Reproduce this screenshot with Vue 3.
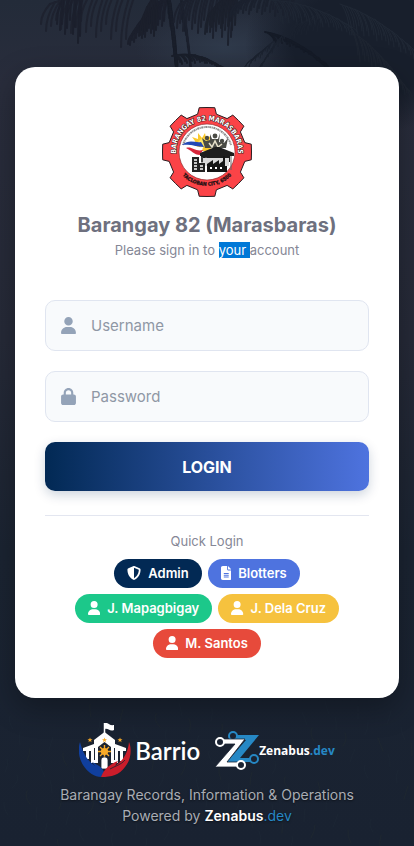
<template>
  <main class="page">
    <svg class="backdrop" viewBox="0 0 414 846" preserveAspectRatio="xMidYMin slice" aria-hidden="true">
      <defs>
        <linearGradient id="night" x1="0" y1="0" x2="0" y2="1">
          <stop offset="0" stop-color="#232b39" />
          <stop offset="0.1" stop-color="#292d3c" />
          <stop offset="0.4" stop-color="#262a38" />
          <stop offset="0.65" stop-color="#1b2432" />
          <stop offset="1" stop-color="#192231" />
        </linearGradient>
        <radialGradient id="glow">
          <stop offset="0" stop-color="#2f3a4b" />
          <stop offset="1" stop-color="#2f3a4b" stop-opacity="0" />
        </radialGradient>
        <radialGradient id="canopy">
          <stop offset="0.6" stop-color="#181f2c" />
          <stop offset="1" stop-color="#181f2c" stop-opacity="0" />
        </radialGradient>
      </defs>
      <rect width="414" height="846" fill="url(#night)" />
      <ellipse cx="225" cy="48" rx="90" ry="40" fill="url(#glow)" />
      <ellipse cx="365" cy="44" rx="120" ry="90" fill="url(#canopy)" />
      <path v-for="(leaf, i) in leaves" :key="i" :d="leaf.d" :stroke="leaf.color" :stroke-width="leaf.width" stroke-linecap="round" fill="none" />
    </svg>

    <section class="card">
      <svg class="seal" viewBox="-45 -45 90 90" role="img" aria-label="Barangay 82 seal">
        <defs>
          <path id="ringTop" d="M-28 13A31 31 0 1 1 28 13" />
          <path id="ringBottom" d="M-33 8A34 34 0 0 0 33 8" />
        </defs>
        <path :d="gear" fill="#fb4347" stroke="#2b1c20" stroke-width="1" stroke-linejoin="round" />
        <circle r="28" fill="#fff" stroke="#7d2529" stroke-width="0.6" />
        <text class="seal-top"><textPath href="#ringTop" startOffset="50%">BARANGAY 82 MARASBARAS</textPath></text>
        <text class="seal-bottom"><textPath href="#ringBottom" startOffset="50%">TACLOBAN CITY, 6500</textPath></text>
        <path d="M-24 -7A25 25 0 0 1 24 -7" fill="none" stroke="#444" stroke-width="2" stroke-dasharray="1 0.6 2 0.5" opacity="0.6" />
        <path d="M-12 -11L-15 -15L-9 -13L-9 -19L-5 -14L-2 -19L-1 -14L4 -16L2 -10L6 -7L2 -1H-9Z" fill="#fbc92d" />
        <path d="M-9 -10L-5 -14L0 -12L1 -6L-6 -4Z" fill="#ffe766" />
        <path d="M-25 -7C-18 -13 -12 -9 -6 -10L-3 -5C-12 -5 -16 -8 -25 -7Z" fill="#2448b5" />
        <path d="M-24 -6C-17 -9 -11 -4 -4 -5L-5 -1C-11 0 -16 -5 -24 -6Z" fill="#fff" />
        <path d="M-21 -4C-15 -6 -12 0 -4 -2L-7 3C-13 3 -16 -2 -21 -4Z" fill="#d7263b" />
        <g fill="#4a4b45">
          <circle cx="0" cy="-14" r="2.200" />
          <circle cx="8" cy="-16" r="2.400" />
          <circle cx="15" cy="-11" r="2.200" />
          <path d="M-5 -14L-1 -11L3 -12L3 -18L5 -13L11 -13L13 -19L12 -10L17 -9L21 -14L19 -4H-2Z" />
        </g>
        <path d="M2 -9L5 -5L8 -11L11 -5L15 -8" stroke="#e7e1ca" stroke-width="1.500" fill="none" />
        <path d="M-7 1L8 -5H12L27 1V4H23V10H-6V4H-7Z" fill="#1d1d1d" />
        <path d="M-5 5V18M-1 5V12M24 4V18" stroke="#666" stroke-width="1" />
        <path d="M-4 6H22V14H-4Z" fill="#d9d9d9" />
        <path d="M0 20V12L6 8V12L12 8V12L16 9V4H18V14H20V20Z" fill="#151515" />
        <path d="M3 15H5V17H3ZM8 15H10V17H8ZM13 15H15V17H13Z" fill="#fff" />
        <path d="M-15 20V5H-8V11H-2V20Z" fill="#222" />
        <path d="M-13 8H-10M-13 11H-10M-13 14H-10M-13 17H-10M-7 14H-4M-7 17H-4" stroke="#fff" stroke-width="1.500" />
      </svg>

      <h1>Barangay 82 (Marasbaras)</h1>
      <p class="hint">Please sign in to <span class="marked">your </span>account</p>

      <form @submit.prevent="login">
        <label v-for="f in fields" :key="f.name" class="field">
          <svg class="field-icon" viewBox="0 0 448 512" aria-hidden="true"><path :d="f.icon" /></svg>
          <input v-model="form[f.name]" :type="f.type" :placeholder="f.label" :aria-label="f.label" />
        </label>
        <button class="login" type="submit">LOGIN</button>
      </form>

      <div class="quick">
        <p>Quick Login</p>
        <div class="pills">
          <button v-for="u in quickUsers" :key="u.label" type="button" class="pill" :class="u.tone" @click="form.username = u.label">
            <svg :viewBox="u.box" aria-hidden="true"><path :d="u.icon" /></svg>
            <span>{{ u.label }}</span>
          </button>
        </div>
      </div>
    </section>

    <footer>
      <div class="brands">
        <div class="barrio">
          <svg viewBox="0 0 52 55" aria-hidden="true">
            <path d="M25.500 0V12" stroke="#fff" stroke-width="1.500" />
            <path d="M26 0C29 -1 30 3 35 2V7C31 9 29 5 26 6Z" fill="#fff" />
            <path d="M4 25L15 21V17L25.500 9L36 17V21L47 25V28H44V38H41V28H39V40H32V42H19V40H12V28H10V36H7V28H4Z" fill="#fff" />
            <path d="M19 24L25.500 19L32 24V42H19Z" fill="#1a2332" />
            <path d="M15.500 25V37M35.500 25V37" stroke="#1a2332" stroke-width="1" />
            <path d="M25.500 22V35M19 28.500H32M21 24L30 33M30 24L21 33" stroke="#f8aa27" stroke-width="1.400" />
            <circle cx="25.500" cy="28.500" r="3.600" fill="#f8aa27" />
            <path d="M22 46V37C22 33 29 33 29 37V46Z" fill="#fff" stroke="#1a2332" stroke-width=".8" />
            <path v-for="s in stars" :key="s" :transform="s" d="M0 -2.500L.7 -.8L2.500 -.7L1 .4L1.600 2.200L0 1.100L-1.600 2.200L-1 .4L-2.500 -.7L-.7 -.8Z" fill="#f8aa27" />
            <path d="M1 19C-1 25 -1 34 4 42C9 50 16 54 22 54L25 49C23 44 19 42 13 39L16 43C9 38 4 31 1 19Z" fill="#103f9e" />
            <path d="M50 19C53 26 52 37 46 44C40 52 33 54 22 54C25 46 31 41 39 38L36 43C44 38 49 30 50 19Z" fill="#cb1d2b" />
            <path d="M46 37C42 42 36 43 31 46" stroke="#1a2332" stroke-width=".8" fill="none" />
          </svg>
          <span>Barrio</span>
        </div>
        <div class="zenabus">
          <svg viewBox="0 0 44 40" aria-hidden="true">
            <path d="M18 4H44L25 27H35V31H12L31 9H18Z" fill="#2688c5" />
            <circle cx="18" cy="5" r="4" fill="#1a2332" stroke="#2688c5" stroke-width="2" />
            <circle cx="39" cy="28" r="4" fill="#1a2332" stroke="#2688c5" stroke-width="2" />
            <path d="M8 8H30L12 31H26V36H0L20 13H8Z" fill="#fff" stroke="#1a2332" stroke-width=".8" />
            <circle cx="5" cy="11" r="4" fill="#1a2332" stroke="#fff" stroke-width="2" />
            <circle cx="26" cy="34" r="4" fill="#1a2332" stroke="#fff" stroke-width="2" />
          </svg>
          <span>Zenabus<i>.dev</i></span>
        </div>
      </div>
      <p>Barangay Records, Information &amp; Operations</p>
      <p>Powered by <a href="#"><b>Zenabus</b><span>.dev</span></a></p>
    </footer>
  </main>
</template>

<script setup>
import { reactive } from 'vue';

const userIcon = 'M224 256A128 128 0 1 0 224 0a128 128 0 1 0 0 256zm-45.7 48C79.8 304 0 383.8 0 482.3C0 498.7 13.3 512 29.7 512H418.3c16.4 0 29.7-13.3 29.7-29.7C448 383.8 368.2 304 269.7 304H178.3z';
const lockIcon = 'M144 144v48H304V144c0-44.2-35.8-80-80-80s-80 35.8-80 80zM80 192V144C80 64.5 144.5 0 224 0s144 64.5 144 144v48h16c35.3 0 64 28.7 64 64V448c0 35.3-28.7 64-64 64H64c-35.3 0-64-28.7-64-64V256c0-35.3 28.7-64 64-64H80z';
const shieldIcon = 'M256 0c4.6 0 9.2 1 13.4 2.9L457.7 82.8c22 9.3 38.4 31 38.3 57.2c-.5 99.2-41.3 280.7-213.6 363.2c-16.7 8-36.1 8-52.8 0C57.3 420.7 16.5 239.2 16 140c-.1-26.2 16.3-47.9 38.3-57.2L242.7 2.9C246.8 1 251.4 0 256 0zm0 66.8V444.8C394 378 431.1 230.1 432 141.4L256 66.8l0 0z';
const fileIcon = 'M64 0C28.7 0 0 28.7 0 64V448c0 35.3 28.7 64 64 64H320c35.3 0 64-28.7 64-64V160H256c-17.7 0-32-14.3-32-32V0H64zM256 0V128H384L256 0zM112 256H272c8.8 0 16 7.2 16 16s-7.2 16-16 16H112c-8.8 0-16-7.2-16-16s7.2-16 16-16zm0 64H272c8.8 0 16 7.2 16 16s-7.2 16-16 16H112c-8.8 0-16-7.2-16-16s7.2-16 16-16zm0 64H272c8.8 0 16 7.2 16 16s-7.2 16-16 16H112c-8.8 0-16-7.2-16-16s7.2-16 16-16z';

const form = reactive({ username: '', password: '' });

const fields = [
  { name: 'username', type: 'text', label: 'Username', icon: userIcon },
  { name: 'password', type: 'password', label: 'Password', icon: lockIcon },
];

const quickUsers = [
  { label: 'Admin', tone: 'navy', icon: shieldIcon, box: '0 0 512 512' },
  { label: 'Blotters', tone: 'blue', icon: fileIcon, box: '0 0 384 512' },
  { label: 'J. Mapagbigay', tone: 'green', icon: userIcon, box: '0 0 448 512' },
  { label: 'J. Dela Cruz', tone: 'yellow', icon: userIcon, box: '0 0 448 512' },
  { label: 'M. Santos', tone: 'red', icon: userIcon, box: '0 0 448 512' },
];

const stars = ['translate(11 17)', 'translate(25.500 17)', 'translate(41 17)'];

function login(){
  form.password = '';
}

// eight-toothed outline of the seal
function polar(r, deg){
  const a = deg * Math.PI / 180;
  return (r * Math.sin(a)).toFixed(1) + ' ' + (-r * Math.cos(a)).toFixed(1);
}
const teeth = [];
for(let i = 0; i < 8; i++){
  const c = i * 45;
  teeth.push(polar(39, c - 14), polar(45, c - 10), polar(44.5, c), polar(45, c + 10), polar(39, c + 14));
}
const gear = 'M' + teeth.join('L') + 'Z';

// palm fronds: a bent spine with leaflets hanging off it
const leaves = [];
function frond(x1, y1, x2, y2, len, count, color, width = 1){
  const mx = (x1 + x2) / 2, my = (y1 + y2) / 2 - 12;
  leaves.push({ d: `M${x1} ${y1}Q${mx} ${my} ${x2} ${y2}`, color, width });
  for(let i = 1; i <= count; i++){
    const t = i / count;
    const x = Math.round((1 - t) * (1 - t) * x1 + 2 * t * (1 - t) * mx + t * t * x2);
    const y = Math.round((1 - t) * (1 - t) * y1 + 2 * t * (1 - t) * my + t * t * y2);
    const l = Math.round(len * (1 - t * 0.5) * (0.75 + (i * 7 % 5) / 10));
    const dx = Math.round((x2 - x1) * 0.1);
    leaves.push({ d: `M${x} ${y}q${dx} ${Math.round(l / 2)} ${dx} ${l}`, color, width });
  }
}
frond(140, -4, 50, 4, 48, 18, '#1e222f', 2);
frond(86, -10, 60, 4, 52, 10, '#1b1f2c', 2);
frond(170, -4, 132, 34, 26, 20, '#1b1f2c', 2);
frond(160, -6, 142, 20, 40, 10, '#1b1f2b', 2);
frond(168, -6, 176, 62, 18, 26, '#191e2a', 3);
frond(180, -6, 190, 60, 18, 18, '#1b202d', 2);
frond(240, -6, 180, 4, 48, 20, '#1c212e', 2);
frond(240, -6, 208, 16, 34, 14, '#1b202c', 2);
frond(172, 56, 222, 68, 8, 20, '#1a1f2b', 2);
frond(300, -6, 236, 4, 24, 24, '#1b212e', 2);
frond(330, 10, 252, 60, 18, 34, '#1b222f');
frond(340, 4, 414, 50, 26, 30, '#202835');
frond(270, 0, 350, 26, 22, 30, '#1f2734');
frond(265, 32, 325, 66, 8, 22, '#151b27', 2);
frond(350, 30, 408, 90, 26, 26, '#1e2531');
frond(300, 20, 260, 68, 12, 20, '#1b222f');

// grass along the lower edge
for(let i = 0; i < 90; i++){
  const x = (i * 53) % 414;
  const y = 700 + (i * 37) % 140;
  leaves.push({ d: `M${x} ${y}q${(i % 7) - 3} 6 ${(i % 11) - 5} 13`, color: i % 3 ? '#1c2634' : '#1e2730', width: 1 });
}
</script>

<style>
body { margin:0; background:#192231; }
</style>

<style scoped>
.page { position:relative; box-sizing:border-box; min-height:100vh; padding:67px 15px 20px; display:flex; flex-direction:column; align-items:center; font-family:Inter, sans-serif; overflow:hidden; }
.backdrop { position:absolute; inset:0; width:100%; height:100%; }
.card { position:relative; box-sizing:border-box; width:100%; max-width:420px; padding:40px 30px; background:#fff; border-radius:20px; box-shadow:0 10px 30px rgba(0,0,0,.3); text-align:center; }
p { margin:0; }
.seal { display:block; width:90px; height:90px; margin:0 auto 15px; }
.seal text { text-anchor:middle; font-family:"DejaVu Sans Condensed", "Open Sans", sans-serif; font-weight:700; }
.seal-top { font-size:7px; fill:#fff; stroke:#33181b; stroke-width:1; paint-order:stroke; }
.seal-bottom { font-size:5px; fill:#1b1012; stroke:#1b1012; stroke-width:.3; }
h1 { margin:0; font-size:20px; line-height:26px; font-weight:700; color:#6e707e; }
.hint { font-size:13px; line-height:20px; margin:2px 0 40px; color:#858796; }
.marked { background:#0078d7; color:#fff; }

form { display:flex; flex-direction:column; gap:20px; }
.field { display:flex; align-items:center; gap:15px; box-sizing:border-box; height:51px; padding:0 15px; border:1px solid #e0e5f0; border-radius:10px; background:#f8fafc; }
.field-icon { flex:none; width:15px; height:17px; fill:#94a3b8; }
.field input { flex:1; min-width:0; padding:0; border:0; outline:0; background:none; font-family:inherit; font-size:15px; line-height:24px; color:#3a3b45; }
.field input::placeholder { color:#8f97a5; opacity:1; }
.login { height:49px; border:0; border-radius:10px; background:linear-gradient(90deg, #022954, #4e73df); box-shadow:0 4px 12px rgba(2,41,84,.2); color:#fff; font-family:inherit; font-size:16px; font-weight:700; cursor:pointer; }

.quick { margin-top:24px; padding-top:16px; border-top:1px solid #e3e6f0; }
.quick p { margin-bottom:8px; font-size:13px; line-height:19px; color:#858796; }
.pills { display:flex; flex-wrap:wrap; justify-content:center; gap:6px; }
.pill { display:flex; align-items:center; gap:7px; height:29px; padding:0 13px 1px; border:0; border-radius:15px; color:#fff; font-family:inherit; font-size:13px; font-weight:600; cursor:pointer; }
.pill svg { height:14px; fill:#fff; }
.navy { background:#022954; }
.blue { background:#4e73df; }
.green { background:#1cc88a; }
.yellow { background:#f6c23e; }
.red { background:#e74a3b; }

footer { position:relative; padding-top:25px; text-align:center; font-size:14px; line-height:21px; color:#a9adb4; text-shadow:0 1px 2px rgba(0,0,0,.5); }
.brands { display:flex; align-items:center; justify-content:center; gap:15px; margin-bottom:6px; color:#fff; text-shadow:none; }
.barrio, .zenabus { display:flex; align-items:center; }
.barrio { gap:4px; font-family:Lato, sans-serif; font-size:24px; font-weight:600; line-height:24px; }
.barrio svg { width:52px; height:55px; }
.zenabus { font-family:"Open Sans", sans-serif; font-size:12px; font-weight:700; line-height:16px; }
.zenabus svg { width:44px; height:40px; }
.zenabus i { font-style:normal; color:#2688c5; }
footer a { color:#fff; text-decoration:none; }
footer a b { font-weight:600; }
footer a span { color:#2688c5; }
</style>
